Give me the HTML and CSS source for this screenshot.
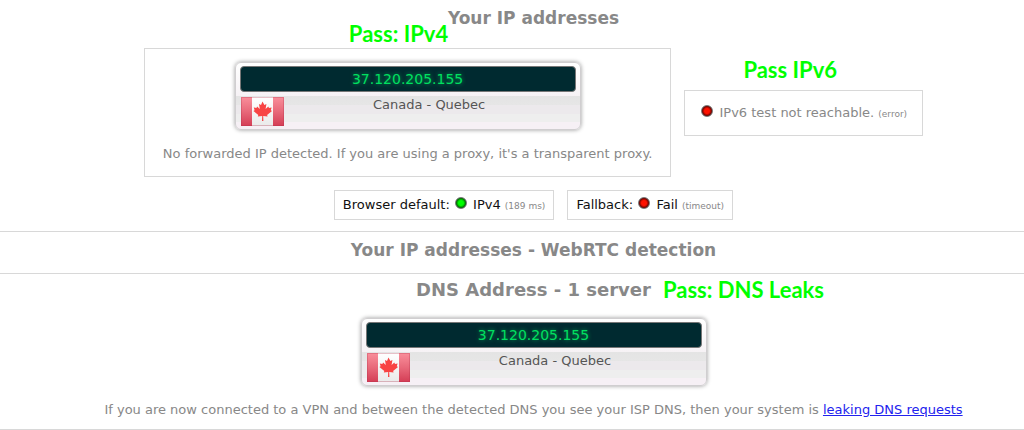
FILE: index.html
```html
<!DOCTYPE html>
<html lang="en">
<head>
    <meta charset="UTF-8">
    <meta name="viewport" content="width=device-width, initial-scale=1.0">
    <title>IP Leak Test</title>
    <link rel="stylesheet" href="styles.css">
</head>
<body>

<svg class="defs" width="0" height="0" aria-hidden="true">
    <defs>
        <linearGradient id="flagRed" x1="0" y1="0" x2="0" y2="1">
            <stop offset="0" stop-color="#f98f9b"/>
            <stop offset="0.5" stop-color="#e8697a"/>
            <stop offset="1" stop-color="#d43d55"/>
        </linearGradient>
        <linearGradient id="flagWhite" x1="0" y1="0" x2="0" y2="1">
            <stop offset="0" stop-color="#ffffff"/>
            <stop offset="1" stop-color="#eaeaea"/>
        </linearGradient>
        <symbol id="flag" viewBox="0 0 43 29">
            <rect width="43" height="29" fill="url(#flagWhite)"/>
            <rect width="11" height="29" fill="url(#flagRed)"/>
            <rect x="32" width="11" height="29" fill="url(#flagRed)"/>
            <path fill="#f84444" d="M21.5 4.5l1.9 3.4 2-1-.8 5.2 2.7-2.7.7 1.5 2.6-.5-.8 2.8 1.2.7-4.9 4 .5 1.7-4.4-.6.2 5h-1.4l.2-5-4.4.6.5-1.7-4.9-4 1.2-.7-.8-2.8 2.6.5.7-1.5 2.7 2.7-.8-5.2 2 1z"/>
            <rect x="0.5" y="0.5" width="42" height="28" fill="none" stroke="#b03048" stroke-opacity="0.3"/>
        </symbol>
    </defs>
</svg>

<section class="section addresses">
    <h2>Your IP addresses</h2>
    <div class="results">
        <div class="box detected">
            <span class="note note-ipv4">Pass: IPv4</span>
            <div class="ip-card">
                <div class="ip-value">37.120.205.155</div>
                <div class="ip-location">
                    <svg class="flag" role="img" aria-label="Canada"><use href="#flag"/></svg>
                    <span>Canada - Quebec</span>
                </div>
            </div>
            <p>No forwarded IP detected. If you are using a proxy, it's a transparent proxy.</p>
        </div>
        <div class="box ipv6">
            <span class="note note-ipv6">Pass IPv6</span>
            <span class="dot red"></span> IPv6 test not reachable. <small>(error)</small>
        </div>
    </div>
    <div class="statuses">
        <div class="box status">Browser default: <span class="dot green"></span> IPv4 <small>(189 ms)</small></div>
        <div class="box status">Fallback: <span class="dot red"></span> Fail <small>(timeout)</small></div>
    </div>
</section>

<section class="section webrtc">
    <h2>Your IP addresses - WebRTC detection</h2>
</section>

<section class="section dns">
    <h2>DNS Address - 1 server<span class="note note-dns">Pass: DNS Leaks</span></h2>
    <div class="ip-card">
        <div class="ip-value">37.120.205.155</div>
        <div class="ip-location">
            <svg class="flag" role="img" aria-label="Canada"><use href="#flag"/></svg>
            <span>Canada - Quebec</span>
        </div>
    </div>
    <p>If you are now connected to a VPN and between the detected DNS you see your ISP DNS, then your system is <a href="#">leaking DNS requests</a></p>
</section>

</body>
</html>
```
FILE: styles.css
```css
body {
    margin: 0;
    font-family: "DejaVu Sans", sans-serif;
    font-size: 13px;
    line-height: 20px;
    color: #888;
    background-color: #fff;
}

.defs {
    position: absolute;
}

.section {
    padding: 6px 0 11px 43px;
    border-bottom: 1px solid #d8d8d8;
    text-align: center;
}

h2 {
    position: relative;
    width: fit-content;
    margin: 0 auto;
    font-size: 17px;
    line-height: 24px;
    color: #888;
}

p {
    margin: 0;
}

small {
    font-size: 9px;
    line-height: 1;
    color: #888;
}

.results {
    display: flex;
    justify-content: center;
    align-items: center;
    gap: 13px;
    margin-top: 18px;
}

.box {
    position: relative;
    border: 1px solid #d8d8d8;
}

.detected {
    padding: 13px 18px 12px;
}

.ipv6 {
    padding: 12px 15px;
}

.statuses {
    display: flex;
    justify-content: center;
    gap: 13px;
    margin-top: 13px;
}

.status {
    padding: 4px 8px;
    color: #111;
}

.ip-card {
    box-sizing: border-box;
    width: 346px;
    max-width: 100%;
    margin: 0 auto 14px;
    padding: 3px 4px;
    border: 1px solid #d0ced0;
    border-radius: 6px;
    background: linear-gradient(#fff 0, #f6f2f5 50%, #e4e4e4 50%, #e6e6e6 64%, #ece9ec 64%, #ece9ec 78%, #eee 78%, #eee 90%, #f6f0f5 90%);
    box-shadow: 0 0 4px rgba(0, 0, 0, 0.4);
}

.ip-value {
    border: 1px solid #777;
    border-radius: 4px;
    background-color: #002a30;
    color: #00e060;
    font-size: 14px;
    line-height: 24px;
    text-shadow: 0 0 4px #00a050;
}

.ip-location {
    display: grid;
    grid-template-columns: 43px 1fr;
    margin-top: 5px;
    padding: 0 1px;
    line-height: 16px;
    color: #555;
}

.flag {
    display: block;
    width: 43px;
    height: 29px;
}

.dot {
    display: inline-block;
    box-sizing: border-box;
    width: 12px;
    height: 12px;
    margin: 0 2px 0 1px;
    border: 1px solid #777;
    border-radius: 50%;
}

.red {
    background: radial-gradient(#f10 35%, #400 75%);
}

.green {
    background: radial-gradient(#0f0 35%, #040 75%);
}

.dns {
    padding-top: 4px;
    padding-bottom: 9px;
}

.dns h2 {
    font-size: 18px;
}

.dns .ip-card {
    margin-top: 16px;
}

a {
    color: #22e;
}

/* verdicts laid over the results */
.note {
    position: absolute;
    font-family: Lato, sans-serif;
    font-size: 22px;
    font-weight: bold;
    line-height: 24px;
    color: #0f0;
    white-space: nowrap;
}

.note-ipv4 {
    bottom: 100%;
    left: 204px;
    margin-bottom: 3px;
}

.note-ipv6 {
    bottom: 100%;
    left: 58px;
    margin-bottom: 9px;
}

.dns .note-dns {
    top: 0;
    left: 100%;
    margin-left: 12px;
}
```
